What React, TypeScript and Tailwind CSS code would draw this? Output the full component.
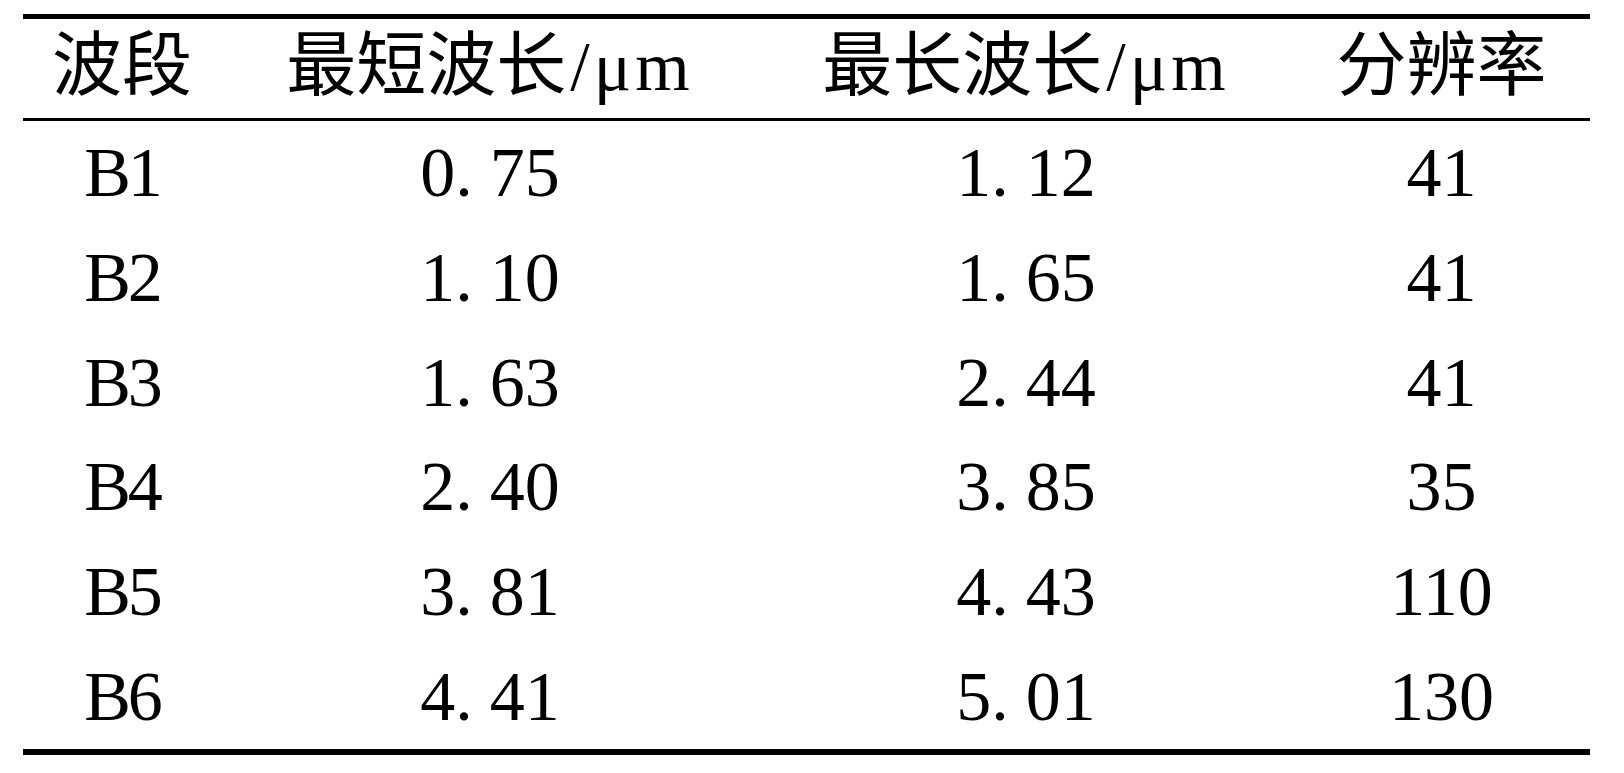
const rows = [
  ['B1', '0.75', '1.12', '41'],
  ['B2', '1.10', '1.65', '41'],
  ['B3', '1.63', '2.44', '41'],
  ['B4', '2.40', '3.85', '35'],
  ['B5', '3.81', '4.43', '110'],
  ['B6', '4.41', '5.01', '130'],
]

function Num({ value }: { value: string }) {
  const [whole, frac] = value.split('.')
  if (frac === undefined) return <span>{value}</span>
  return (
    <span>
      {whole}.<span className="ml-[17px]">{frac}</span>
    </span>
  )
}

export default function App() {
  return (
    <div className="w-[1624px] h-[773px] bg-white pt-[14px] pl-[23px] text-black font-['Liberation_Serif','Noto_Sans_CJK_SC',serif] text-[70px] leading-none">
      <div className="w-[1567px]">
        <div className="h-[5px] bg-black" />

        {/* header */}
        <div className="grid grid-cols-[198px_538px_534px_297px] h-[99px] items-center text-center pb-[3px]">
          <div>波段</div>
          <div>
            最短波长<span className="ml-[4px] tracking-[4px]">/μm</span>
          </div>
          <div>
            最长波长<span className="ml-[4px] tracking-[4px]">/μm</span>
          </div>
          <div>分辨率</div>
        </div>

        <div className="h-[3px] bg-black" />

        {rows.map((r) => (
          <div key={r[0]} className="grid grid-cols-[198px_538px_534px_297px] h-[104.67px] items-center text-center">
            <div className="tracking-[-3px]">{r[0]}</div>
            <div>
              <Num value={r[1]} />
            </div>
            <div>
              <Num value={r[2]} />
            </div>
            <div>
              <Num value={r[3]} />
            </div>
          </div>
        ))}

        <div className="h-[6px] bg-black" />
      </div>
    </div>
  )
}
